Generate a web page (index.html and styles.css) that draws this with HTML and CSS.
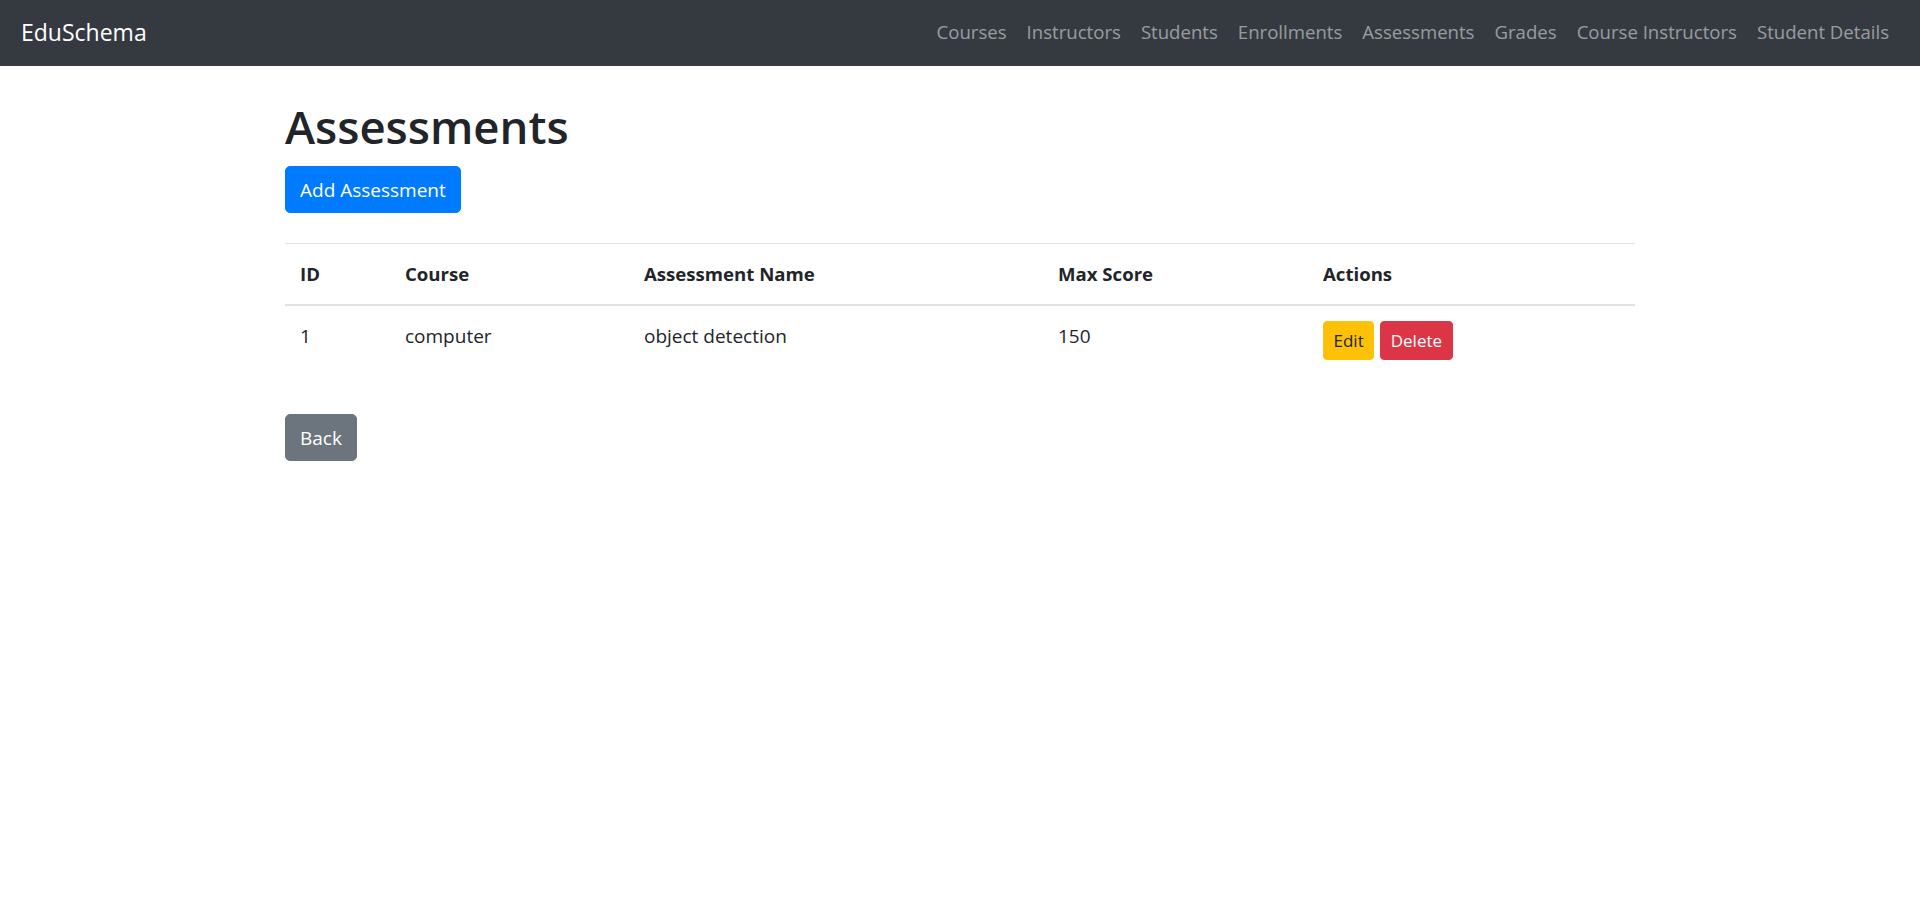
FILE: index.html
```html
<!DOCTYPE html>
<html lang="en">
<head>
<meta charset="utf-8">
<title>Assessments - EduSchema</title>
<link rel="stylesheet" href="styles.css">
</head>
<body>
<nav class="navbar">
  <a class="brand" href="#">EduSchema</a>
  <ul class="nav">
    <li><a href="#">Courses</a></li>
    <li><a href="#">Instructors</a></li>
    <li><a href="#">Students</a></li>
    <li><a href="#">Enrollments</a></li>
    <li><a href="#">Assessments</a></li>
    <li><a href="#">Grades</a></li>
    <li><a href="#">Course Instructors</a></li>
    <li><a href="#">Student Details</a></li>
  </ul>
</nav>
<main class="container">
  <h1 class="title">Assessments</h1>
  <a class="btn btn-primary" href="#">Add Assessment</a>
  <table class="table">
    <colgroup>
      <col class="c-id"><col class="c-course"><col class="c-name"><col class="c-max"><col class="c-actions">
    </colgroup>
    <thead>
      <tr><th>ID</th><th>Course</th><th>Assessment Name</th><th>Max Score</th><th>Actions</th></tr>
    </thead>
    <tbody>
      <tr>
        <td>1</td>
        <td>computer</td>
        <td>object detection</td>
        <td>150</td>
        <td><span class="actions"><a class="btn-sm btn-warning" href="#">Edit</a><a class="btn-sm btn-danger" href="#">Delete</a></span></td>
      </tr>
    </tbody>
  </table>
  <a class="btn btn-secondary back" href="#">Back</a>
</main>
</body>
</html>
```

FILE: styles.css
```css
* { box-sizing: border-box; }
html, body { margin: 0; padding: 0; }
body {
  font-family: "Open Sans", "Noto Sans", "Liberation Sans", sans-serif;
  font-size: 19px;
  line-height: 30px;
  color: #212529;
  background: #fff;
}
a { text-decoration: none; }

.navbar {
  height: 66px;
  background: #343a40;
  display: flex;
  align-items: center;
  justify-content: space-between;
  padding: 0 21px 0 21px;
}
.brand {
  color: #fff;
  font-size: 23px;
  line-height: 30px;
  margin-top: -2px;
}
.nav {
  list-style: none;
  margin: -2px 0 0;
  padding: 0;
  display: flex;
}
.nav a {
  display: block;
  padding: 0 10px;
  color: rgba(255,255,255,.5);
  font-size: 18.6px;
}

.container {
  width: 1350px;
  margin: 0 auto;
  padding-top: 30px;
}
.title {
  margin: 0 0 10px;
  font-size: 45.5px;
  line-height: 60px;
  font-weight: 600;
}

.btn {
  display: inline-block;
  padding: 7.5px 14px;
  border: 1px solid transparent;
  border-radius: 5px;
  font-size: 19px;
  line-height: 30px;
  color: #fff;
}
.btn-primary { background: #007bff; border-color: #007bff; }
.btn-secondary { background: #6c757d; border-color: #6c757d; }

.table {
  width: 100%;
  margin-top: 30px;
  margin-bottom: 20px;
  border-collapse: collapse;
  table-layout: fixed;
}
.c-id { width: 105px; }
.c-course { width: 239px; }
.c-name { width: 414px; }
.c-max { width: 265px; }
.c-actions { width: 327px; }
.table th, .table td {
  padding: 15px;
  text-align: left;
  vertical-align: top;
  border-top: 1px solid #dee2e6;
}
.table th { font-weight: 700; font-size: 18.6px; }
.table thead th { border-bottom: 2px solid #dee2e6; }

.actions { display: flex; gap: 6px; }
.btn-sm {
  display: inline-block;
  padding: 3.5px 9.5px;
  border: 1px solid transparent;
  border-radius: 4px;
  font-size: 17px;
  line-height: 30px;
}
.btn-warning { background: #ffc107; border-color: #ffc107; color: #212529; }
.btn-danger { background: #dc3545; border-color: #dc3545; color: #fff; }

.back { margin-top: 19px; }
```
